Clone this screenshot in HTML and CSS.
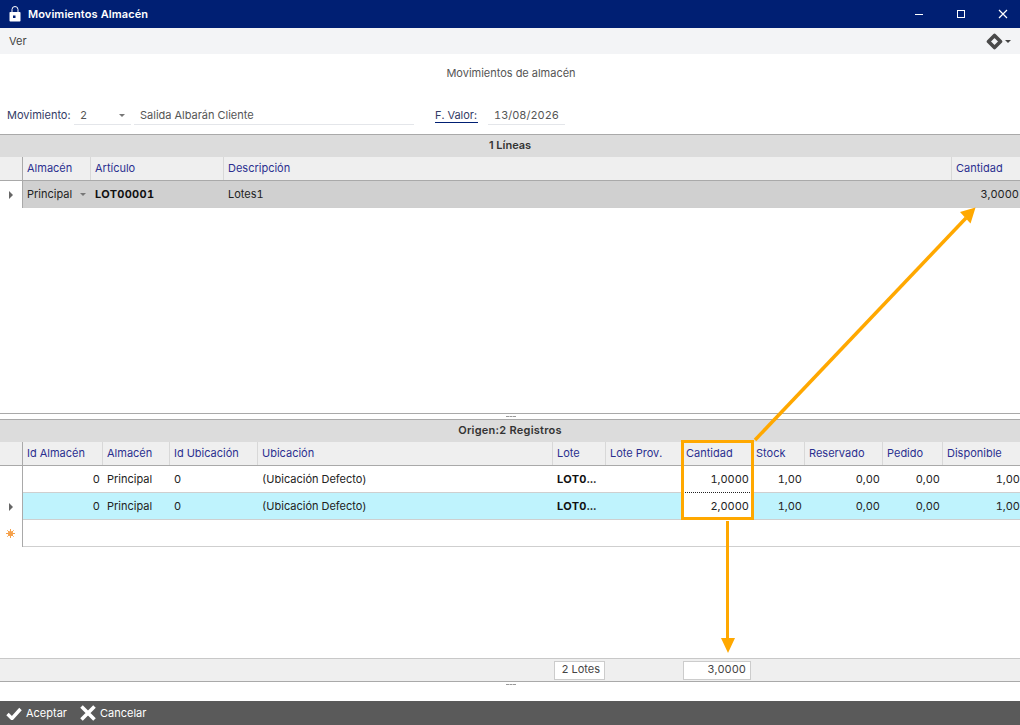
FILE: index.html
```html
<!DOCTYPE html>
<html lang="es">
<head>
    <meta charset="UTF-8">
    <meta name="viewport" content="width=device-width, initial-scale=1.0">
    <title>Movimientos Almacén</title>
    <link rel="stylesheet" href="styles.css">
</head>
<body>
    <div class="window">
        <div class="titlebar">
            <svg class="app-icon" width="12" height="16" viewBox="0 0 12 16">
                <path d="M3 6V3.5a3 3 0 0 1 6 0V6" fill="none" stroke="#fff" stroke-width="1"/>
                <rect x="0.5" y="6" width="11" height="9.5" rx="0.8" fill="#fff"/>
                <rect x="4" y="9.5" width="2.5" height="2.5" fill="#001f73"/>
            </svg>
            <span class="title">Movimientos Almacén</span>
            <div class="window-buttons">
                <svg width="10" height="10" viewBox="0 0 10 10"><path d="M1 5.5h8" stroke="#fff" stroke-width="1"/></svg>
                <svg width="10" height="10" viewBox="0 0 10 10"><rect x="1.5" y="1.5" width="7" height="7" fill="none" stroke="#fff" stroke-width="1"/></svg>
                <svg width="10" height="10" viewBox="0 0 10 10"><path d="M1 1l8 8M9 1l-8 8" stroke="#fff" stroke-width="1.2"/></svg>
            </div>
        </div>

        <div class="menubar">
            <span>Ver</span>
            <div class="menu-logo">
                <svg width="17" height="17" viewBox="0 0 17 17">
                    <path d="M8.5 2.5L14.5 8.5L8.5 14.5L2.5 8.5Z" fill="#f3f4f6" stroke="#4a4a4a" stroke-width="3.6" stroke-linejoin="round"/>
                </svg>
                <span class="caret caret-dark"></span>
            </div>
        </div>

        <div class="page-title">Movimientos de almacén</div>

        <div class="form-row">
            <span class="form-label">Movimiento:</span>
            <div class="field field-code">2<span class="caret"></span></div>
            <div class="field field-desc">Salida Albarán Cliente</div>
            <span class="form-label form-link">F. Valor:</span>
            <div class="field field-date">13/08/2026</div>
        </div>

        <div class="pane pane-top">
            <div class="caption">1 Líneas</div>
            <div class="row head cols-top">
                <div class="ind"></div>
                <div class="cell">Almacén</div>
                <div class="cell">Artículo</div>
                <div class="cell">Descripción</div>
                <div class="cell">Cantidad</div>
            </div>
            <div class="row body selected cols-top">
                <div class="ind"><span class="pointer"></span></div>
                <div class="cell cell-combo">Principal<span class="caret"></span></div>
                <div class="cell bold">LOT00001</div>
                <div class="cell">Lotes1</div>
                <div class="cell num">3,0000</div>
            </div>
        </div>

        <div class="splitter"><span class="grip"></span></div>

        <div class="pane pane-bottom">
            <div class="caption caption-wide">Origen:2 Registros</div>
            <div class="row head cols-bottom">
                <div class="ind"></div>
                <div class="cell">Id Almacén</div>
                <div class="cell">Almacén</div>
                <div class="cell">Id Ubicación</div>
                <div class="cell">Ubicación</div>
                <div class="cell">Lote</div>
                <div class="cell">Lote Prov.</div>
                <div class="cell">Cantidad</div>
                <div class="cell">Stock</div>
                <div class="cell">Reservado</div>
                <div class="cell">Pedido</div>
                <div class="cell">Disponible</div>
            </div>
            <div class="row body cols-bottom">
                <div class="ind"></div>
                <div class="cell num">0</div>
                <div class="cell">Principal</div>
                <div class="cell">0</div>
                <div class="cell">(Ubicación Defecto)</div>
                <div class="cell bold">LOT0...</div>
                <div class="cell"></div>
                <div class="cell num">1,0000</div>
                <div class="cell num">1,00</div>
                <div class="cell num">0,00</div>
                <div class="cell num">0,00</div>
                <div class="cell num">1,00</div>
            </div>
            <div class="row body current cols-bottom">
                <div class="ind"><span class="pointer"></span></div>
                <div class="cell num">0</div>
                <div class="cell">Principal</div>
                <div class="cell">0</div>
                <div class="cell">(Ubicación Defecto)</div>
                <div class="cell bold">LOT0...</div>
                <div class="cell"></div>
                <div class="cell num editing">2,0000</div>
                <div class="cell num">1,00</div>
                <div class="cell num">0,00</div>
                <div class="cell num">0,00</div>
                <div class="cell num">1,00</div>
            </div>
            <div class="row body new-row cols-bottom">
                <div class="ind">
                    <svg width="9" height="9" viewBox="0 0 9 9">
                        <path d="M4.5 0v9M0 4.5h9M1.3 1.3l6.4 6.4M7.7 1.3l-6.4 6.4" stroke="#f5a04a" stroke-width="1"/>
                        <circle cx="4.5" cy="4.5" r="2.6" fill="#f5a04a"/>
                    </svg>
                </div>
            </div>
        </div>

        <div class="summary">
            <div class="total total-lots">2 Lotes</div>
            <div class="total total-qty">3,0000</div>
        </div>
        <div class="grip-row"><span class="grip"></span></div>

        <div class="actions">
            <div class="action">
                <svg width="16" height="13" viewBox="0 0 16 13"><path d="M1.5 7l4.5 4.5L14.5 2" fill="none" stroke="#fff" stroke-width="3.4"/></svg>
                Aceptar
            </div>
            <div class="action">
                <svg width="16" height="16" viewBox="0 0 16 16"><path d="M1.5 1.5l13 13M14.5 1.5l-13 13" fill="none" stroke="#fff" stroke-width="3.6"/></svg>
                Cancelar
            </div>
        </div>

        <!-- anotaciones naranjas sobre la captura -->
        <div class="highlight"></div>
        <svg class="arrows" width="1020" height="725" viewBox="0 0 1020 725">
            <path d="M755 440L966 218" fill="none" stroke="#ffa800" stroke-width="3.5"/>
            <path d="M975.5 207.5L970.5 223.5L960 212Z" fill="#ffa800"/>
            <path d="M727.5 521V640" fill="none" stroke="#ffa800" stroke-width="3"/>
            <path d="M728 653L721 638H735Z" fill="#ffa800"/>
        </svg>
    </div>
</body>
</html>
```

FILE: styles.css
```css
* {
    margin: 0;
    padding: 0;
    box-sizing: border-box;
    font-family: Inter, "Liberation Sans", sans-serif;
    font-variant-numeric: tabular-nums;
}

body {
    background: white;
    font-size: 11px;
    color: #333;
    overflow: hidden;
}

.window {
    position: relative;
    width: 1020px;
    height: 725px;
    display: flex;
    flex-direction: column;
}

.titlebar {
    height: 28px;
    flex: none;
    display: flex;
    align-items: center;
    padding-left: 9px;
    background: #001f73;
    color: white;
}

.title {
    margin-left: 7px;
    font-weight: 600;
    letter-spacing: 0.1px;
}

.window-buttons {
    margin-left: auto;
    display: flex;
    gap: 32px;
    padding-right: 12px;
}

.menubar {
    height: 26px;
    flex: none;
    display: flex;
    align-items: center;
    justify-content: space-between;
    padding: 0 9px;
    background: #f3f4f6;
    color: #444;
}

.menu-logo {
    display: flex;
    align-items: center;
    gap: 2px;
}

.page-title {
    height: 38px;
    flex: none;
    padding-top: 12px;
    padding-left: 2px;
    text-align: center;
    color: #555;
}

.form-row {
    height: 42px;
    flex: none;
    display: flex;
    align-items: center;
    padding: 5px 0 0 7px;
}

.form-label {
    width: 64px;
    margin-bottom: 2px;
    color: #333b66;
}

.form-link {
    width: 43px;
    margin-bottom: 0;
    margin-left: 21px;
    border-bottom: 1px solid #001f73;
    line-height: 14px;
}

.field {
    position: relative;
    height: 19px;
    line-height: 18px;
    border-bottom: 1px solid #e4e6ea;
    color: #555;
}

.field-code {
    width: 57px;
    margin-left: 3px;
    padding-left: 6px;
}

.field-code .caret {
    position: absolute;
    right: 6px;
    top: 8px;
}

.field-desc {
    width: 280px;
    margin-left: 3px;
    padding-left: 6px;
}

.field-date {
    width: 77px;
    margin-left: 10px;
    padding-left: 6px;
}

.caret {
    display: inline-block;
    width: 0;
    height: 0;
    border-left: 3px solid transparent;
    border-right: 3px solid transparent;
    border-top: 3px solid #777;
}

.caret-dark {
    border-top-color: #444;
}

.pane {
    flex: none;
    overflow: hidden;
}

.pane-top {
    height: 279px;
    border-top: 1px solid #a9a9a9;
}

.pane-bottom {
    height: 239px;
    border-top: 1px solid #a9a9a9;
}

.caption {
    height: 22px;
    line-height: 21px;
    text-align: center;
    font-weight: 600;
    font-variant-numeric: normal;
    background: #dcdcdc;
    color: #333;
}

.caption-wide {
    letter-spacing: 0.25px;
}

.row {
    display: grid;
}

.cols-top {
    grid-template-columns: 23px 68px 133px 728px 68px;
}

.cols-bottom {
    grid-template-columns: 23px 80px 67px 88px 295px 53px 76px 70px 53px 78px 60px 78px;
}

.head {
    height: 24px;
    background: #efefef;
    border-bottom: 1px solid #a9a9a9;
    color: #2b2f8f;
}

.head .cell {
    border-right: 1px solid #d8d8d8;
}

.head .cell:last-child {
    border-right: none;
}

.head .ind {
    border-right: 1px solid #a9a9a9;
}

.body {
    height: 27px;
    border-bottom: 1px solid #cfcfcf;
    color: #222;
}

.body .ind {
    margin-bottom: -1px;
    background: white;
    border-right: 1px solid #a9a9a9;
}

.selected {
    background: #d0d0d0;
}

.current {
    background: #bff3fd;
}

.ind {
    display: flex;
    align-items: center;
    justify-content: center;
    padding-right: 1px;
}

.cell {
    padding: 0 4px;
    line-height: 23px;
    white-space: nowrap;
    overflow: hidden;
}

.body .cell {
    line-height: 26px;
}

.num {
    text-align: right;
    padding-right: 3px;
}

.body .num:last-child {
    padding-right: 1px;
}

.bold {
    font-weight: 700;
    letter-spacing: 0.3px;
    color: #111;
}

.cell-combo {
    display: flex;
    align-items: center;
    justify-content: space-between;
    padding-right: 5px;
}

.editing {
    background: white;
    border-top: 1px dotted #222;
    margin-top: -1px;
}

.pointer {
    width: 0;
    height: 0;
    border-top: 4px solid transparent;
    border-bottom: 4px solid transparent;
    border-left: 4px solid #666;
}

.splitter {
    height: 6px;
    flex: none;
    display: flex;
    justify-content: center;
    align-items: center;
    padding-left: 2px;
    border-top: 1px solid #a9a9a9;
}

.grip {
    width: 10px;
    border-top: 1px dashed #999;
}

.summary {
    position: relative;
    height: 24px;
    flex: none;
    display: flex;
    align-items: center;
    background: #efefef;
    border-top: 1px solid #c8c8c8;
    border-bottom: 1px solid #a9a9a9;
    padding-left: 554px;
}

.total {
    height: 19px;
    line-height: 15px;
    background: white;
    border: 1px solid #cccccc;
    text-align: right;
    padding-right: 4px;
    color: #444;
}

.total-lots {
    width: 51px;
}

.total-qty {
    width: 68px;
    margin-left: 78px;
}

.grip-row {
    height: 19px;
    flex: none;
    display: flex;
    justify-content: center;
    padding-top: 2px;
    padding-left: 2px;
}

.actions {
    flex: 1;
    display: flex;
    align-items: center;
    gap: 13px;
    padding-left: 6px;
    background: #5a5a5a;
    color: white;
}

.action {
    display: flex;
    align-items: center;
    gap: 4px;
}

.highlight {
    position: absolute;
    left: 681px;
    top: 440px;
    width: 73px;
    height: 80px;
    border: 3px solid #ffa800;
}

.arrows {
    position: absolute;
    left: 0;
    top: 0;
    pointer-events: none;
}
```
